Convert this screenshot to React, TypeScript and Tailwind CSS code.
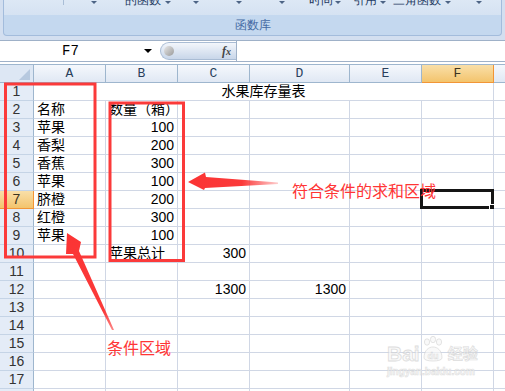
import React from "react";

type Cell = { t: string; num?: boolean };

const COLS = ["A", "B", "C", "D", "E", "F", "G"];

// sheet contents, row -> column -> cell
const data: Record<number, Record<string, Cell>> = {
  2: { A: { t: "名称" }, B: { t: "数量（箱）" } },
  3: { A: { t: "苹果" }, B: { t: "100", num: true } },
  4: { A: { t: "香梨" }, B: { t: "200", num: true } },
  5: { A: { t: "香蕉" }, B: { t: "300", num: true } },
  6: { A: { t: "苹果" }, B: { t: "100", num: true } },
  7: { A: { t: "脐橙" }, B: { t: "200", num: true } },
  8: { A: { t: "红橙" }, B: { t: "300", num: true } },
  9: { A: { t: "苹果" }, B: { t: "100", num: true } },
  10: { B: { t: "苹果总计" }, C: { t: "300", num: true } },
  12: { C: { t: "1300", num: true }, D: { t: "1300", num: true } },
};

const font = "font-['Liberation_Sans','Noto_Sans_CJK_SC',sans-serif]";
const mono = "font-['Liberation_Mono','DejaVu_Sans_Mono',monospace]";

function Caret() {
  return <div className="w-0 h-0 border-l-[3px] border-r-[3px] border-t-[3px] border-l-transparent border-r-transparent border-t-[#4d6485] mt-[1px]" />;
}

function Ribbon() {
  return (
    <div className="h-[40px] bg-[#d3dff0]">
      <div className="mx-[3px] h-[36px] rounded-b-[4px] border border-t-0 border-[#a3bcdc] bg-[#c4d8ef] overflow-hidden flex flex-col">
        <div className="h-[15px] bg-linear-to-b from-[#dde8f5] to-[#d5e2f2] flex items-start text-[12px] leading-[12px] text-[#1f3b63]">
          <div className="ml-[59px] w-px h-[5px] bg-[#a9bdd6]" />
          <div className="ml-[27px]"><Caret /></div>
          <span className="ml-[28px] -mt-[6px]">的函数</span>
          <div className="ml-[4px]"><Caret /></div>
          <div className="ml-[22px]"><Caret /></div>
          <div className="ml-[37px]"><Caret /></div>
          <div className="ml-[37px]"><Caret /></div>
          <span className="ml-[24px] -mt-[6px]">时间</span>
          <div className="ml-[2px]"><Caret /></div>
          <span className="ml-[12px] -mt-[6px]">引用</span>
          <div className="ml-[3px]"><Caret /></div>
          <span className="ml-[7px] -mt-[6px]">三角函数</span>
          <div className="ml-[4px]"><Caret /></div>
          <div className="ml-[25px]"><Caret /></div>
        </div>
        <div className="flex-1 flex items-center justify-center text-[12px] text-[#4369a3] pb-[1px]">函数库</div>
      </div>
    </div>
  );
}

function FormulaBar() {
  return (
    <div className="h-[22px] flex bg-white border-t border-b border-[#9fb1c8]">
      <div className="w-[155px] flex items-center">
        <span className={`${mono} text-[14px] pl-[62px] text-black`}>F7</span>
        <div className="ml-auto mr-[3px] w-0 h-0 border-l-[4px] border-r-[4px] border-t-[4px] border-l-transparent border-r-transparent border-t-black" />
      </div>
      <div className="ml-[5px] my-auto w-[76px] h-[18px] rounded-l-full border border-r-0 border-[#a9bcd4] bg-linear-to-b from-[#f3f6fb] to-[#c8d6e9] flex items-center">
        <div className="ml-[3px] w-[10px] h-[10px] rounded-full bg-linear-to-br from-[#e8e8e8] to-[#9a9a9a]" />
        <span className="ml-auto mr-[5px] font-['Liberation_Serif',serif] italic font-bold text-[12px] text-[#444]">f<span className="text-[10px]">x</span></span>
      </div>
      <div className="flex-1 border-l border-[#9fb1c8]" />
    </div>
  );
}

function Sheet() {
  const rows = Array.from({ length: 18 }, (_, i) => i + 1);
  return (
    <div className={`mt-[2px] w-[566px] border-t border-[#9eb6ce] grid grid-cols-[34px_72px_72px_72px_100px_72px_72px_72px] ${font}`}>
      {/* column headers */}
      <div className="h-[18px] border-r border-b border-[#9eb6ce] bg-[#dde7f4] flex items-end justify-end p-[2px]">
        <div className="w-0 h-0 border-l-[11px] border-t-[11px] border-l-transparent border-t-transparent border-b-0 border-r-0 border-[#b7c9df] [border-bottom:11px_solid_#b7c9df] mr-[1px]" />
      </div>
      {COLS.map((c) => (
        <div
          key={c}
          className={`h-[18px] border-r border-b flex items-center justify-center text-[13px] ${mono} ${
            c === "F"
              ? "border-[#f29536] bg-linear-to-b from-[#f9dfa8] to-[#f3c46c] text-[#3c3420]"
              : "border-[#9eb6ce] bg-linear-to-b from-[#f5f8fc] to-[#e0e8f4] text-[#2a3f5c]"
          }`}
        >
          {c}
        </div>
      ))}

      {rows.map((r) => (
        <React.Fragment key={r}>
          <div
            className={`h-[18px] border-r border-b text-center text-[14px] leading-[17px] ${
              r === 7
                ? "border-[#f29536] bg-linear-to-b from-[#f9dfa8] to-[#f3c46c] text-[#3c3420]"
                : "border-r-[#9eb6ce] border-b-[#c5d4e6] bg-[#e4ecf7] text-[#333]"
            }`}
          >
            {r}
          </div>
          {r === 1 ? (
            <>
              <div className="col-span-6 h-[18px] border-r border-b border-[#d0d7e5] text-center text-[14px] leading-[17px] text-black">
                水果库存量表
              </div>
              <div className="h-[18px] border-r border-b border-[#d0d7e5]" />
            </>
          ) : (
            COLS.map((c) => {
              const cell = data[r]?.[c];
              const sel = r === 7 && c === "F";
              return (
                <div
                  key={c}
                  className={`relative h-[18px] border-r border-b border-[#d0d7e5] text-[14px] leading-[17px] whitespace-nowrap text-black ${
                    cell?.num ? "text-right pr-[3px]" : "pl-[3px]"
                  }`}
                >
                  {cell?.t}
                  {sel && (
                    <div className="absolute -top-[2px] -left-[2px] -right-[1px] -bottom-[1px] border-[3px] border-[#151515]">
                      <div className="absolute -right-[4px] -bottom-[4px] w-[6px] h-[6px] bg-[#151515] border border-white" />
                    </div>
                  )}
                </div>
              );
            })
          )}
        </React.Fragment>
      ))}
    </div>
  );
}

function Annotations() {
  return (
    <>
      <svg className="absolute inset-0 pointer-events-none" width="505" height="391" viewBox="0 0 505 391">
        <defs>
          <linearGradient id="a1" gradientUnits="userSpaceOnUse" x1="188" y1="182" x2="278" y2="183">
            <stop offset="0" stopColor="#fb3434" />
            <stop offset="0.6" stopColor="#fb3a3a" />
            <stop offset="1" stopColor="#fb3a3a" stopOpacity="0.25" />
          </linearGradient>
          <linearGradient id="a2" gradientUnits="userSpaceOnUse" x1="67" y1="233" x2="114" y2="330">
            <stop offset="0" stopColor="#fb3434" />
            <stop offset="0.8" stopColor="#fb3a3a" />
            <stop offset="1" stopColor="#fb3a3a" stopOpacity="0.6" />
          </linearGradient>
        </defs>
        <rect x="5.5" y="84" width="89.5" height="173" fill="none" stroke="#fb3a3a" strokeWidth="3" />
        <rect x="110" y="103" width="73.5" height="157.5" fill="none" stroke="#fb3a3a" strokeWidth="3" />
        <polygon points="188,182 205,172.5 206,177 278,182.5 278,184 205,188 204,190" fill="url(#a1)" />
        <polygon points="67,233 81,242 79,251 114,330 112,330 73,254 66,254" fill="url(#a2)" />
      </svg>
      <div className={`absolute left-[292px] top-[183px] text-[16px] leading-[17px] text-[#ff3535] ${font}`}>符合条件的求和区域</div>
      <div className={`absolute left-[107px] top-[340px] text-[16px] leading-[17px] text-[#ff3535] ${font}`}>条件区域</div>
      {/* watermark */}
      <div className="absolute left-[387px] top-[335px] flex flex-col items-start opacity-70">
        <div className="flex items-end h-[28px]">
          <span className="font-['Liberation_Sans',sans-serif] font-bold text-[21px] leading-[18px] text-[#f7f7f7] [-webkit-text-stroke:0.8px_#cfcfcf]">Bai</span>
          <svg width="24" height="27" viewBox="0 0 24 27" className="ml-[1px]">
            <g fill="#f7f7f7" stroke="#cfcfcf" strokeWidth="0.8">
              <ellipse cx="6" cy="6" rx="2.6" ry="3.2" />
              <ellipse cx="12" cy="3.5" rx="2.6" ry="3.2" />
              <ellipse cx="18" cy="6" rx="2.6" ry="3.2" />
              <path d="M3 22 C3 14 8 11 12 11 C16 11 21 14 21 22 C21 26 3 26 3 22 Z" />
            </g>
            <text x="12" y="23" textAnchor="middle" fontSize="9" fontWeight="bold" fontFamily="Liberation Sans, sans-serif" fill="#f7f7f7" stroke="#cfcfcf" strokeWidth="0.5">du</text>
          </svg>
          <span className={`ml-[3px] ${font} font-bold text-[15px] leading-[18px] text-[#f7f7f7] [-webkit-text-stroke:0.7px_#cfcfcf]`}>经验</span>
        </div>
        <span className="mt-[4px] font-['Liberation_Sans',sans-serif] font-bold text-[10px] leading-[10px] text-[#f7f7f7] [-webkit-text-stroke:0.6px_#d3d3d3]">jingyan.baidu.com</span>
      </div>
    </>
  );
}

export default function App() {
  return (
    <div className="relative w-[505px] h-[391px] overflow-hidden bg-white">
      <Ribbon />
      <FormulaBar />
      <Sheet />
      <Annotations />
    </div>
  );
}
